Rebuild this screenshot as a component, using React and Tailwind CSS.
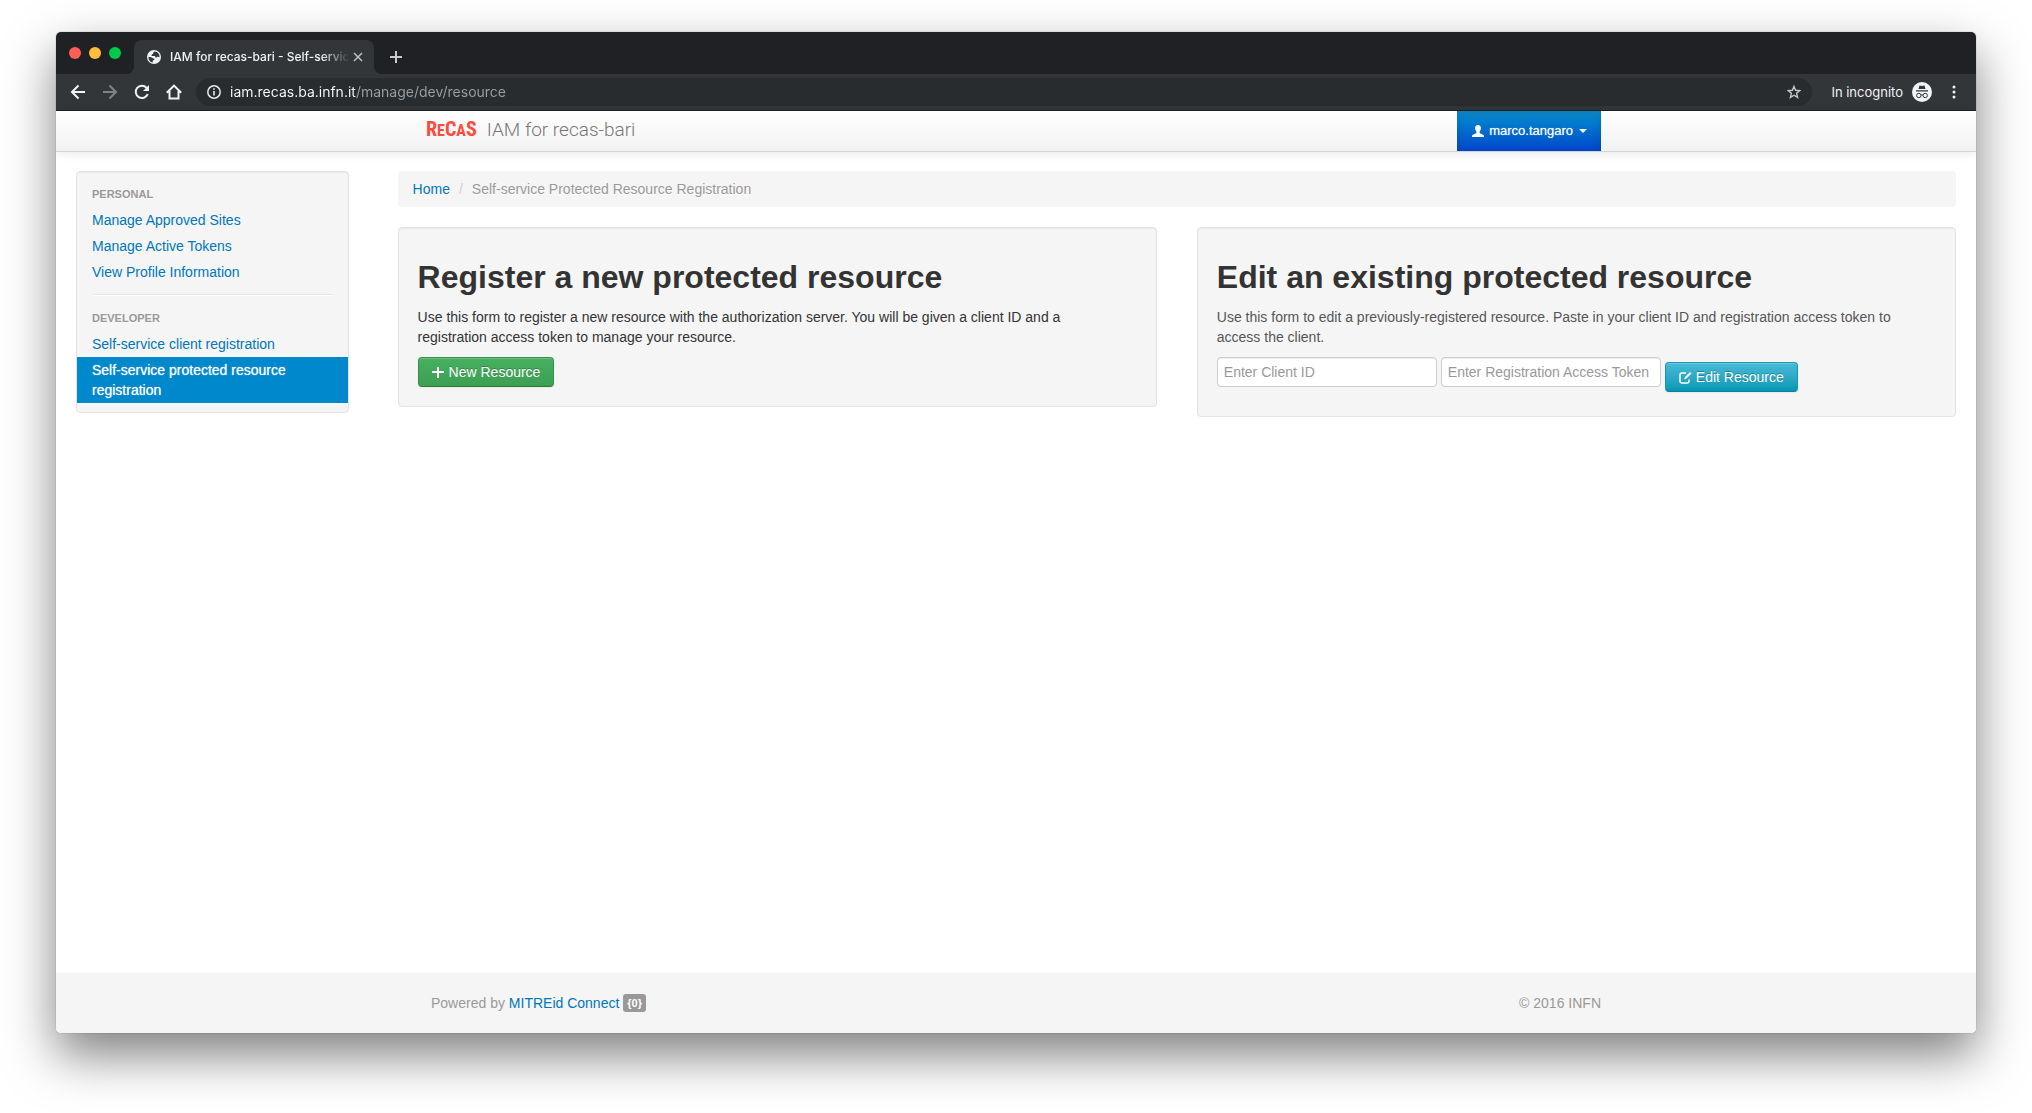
const personalLinks = ["Manage Approved Sites", "Manage Active Tokens", "View Profile Information"];

function Globe() {
  return (
    <svg className="size-[14px] shrink-0" viewBox="0 0 14 14" aria-hidden="true">
      <circle cx="7" cy="7" r="7" fill="#f1f3f4" />
      <path d="M7.600 1.500c-.9 0-1.300.8-1.300 1.600.3.6-.2 1-.9 1-.6.1-.5.9-.9 1.300-.3.4.3.6.8.5h2.200c.7 0 .8.700.8 1.300s1 .4 1.500 0c.4-.4 1-.5 1.600-.2l1.200.3A5.800 5.800 0 0 0 7.600 1.500Z" fill="#35363a" />
      <path d="M1.400 7.200c1.200-.3 3 .1 3.900.8.700.5 1.800.3 2.100 1 .2.700-.4 1.200-1.200 1.200-.5.1-.5.700-.5 1.200v1.200A5.800 5.800 0 0 1 1.400 7.200Z" fill="#35363a" />
    </svg>
  );
}

function Glyph({ d, color = "#f1f3f4", width = 2 }) {
  return (
    <svg className="size-4" viewBox="0 0 16 16" fill="none" stroke={color} strokeWidth={width} aria-hidden="true">
      <path d={d} />
    </svg>
  );
}

function TabStrip() {
  return (
    <div className="flex h-[42px] items-end bg-[#202124] pl-[13px]">
      <div className="flex h-[42px] w-[65px] gap-2 pt-[15px]">
        <span className="size-3 rounded-full bg-[#ff5f57]" />
        <span className="size-3 rounded-full bg-[#ffbd3e]" />
        <span className="size-3 rounded-full bg-[#00ca4e]" />
      </div>
      <div className="relative flex h-[34px] w-60 items-center rounded-t-lg bg-[#323639] pr-2 pl-[13px]">
        <span className="absolute bottom-0 -left-2 size-2 bg-[radial-gradient(circle_at_0_0,transparent_8px,#323639_8px)]" />
        <span className="absolute -right-2 bottom-0 size-2 bg-[radial-gradient(circle_at_100%_0,transparent_8px,#323639_8px)]" />
        <Globe />
        <span className="ml-[9px] flex-1 font-[Inter,sans-serif] text-xs font-medium whitespace-nowrap text-[#f1f3f4] [mask-image:linear-gradient(to_right,#000_84%,transparent)]">
          IAM for recas-bari - Self-servic
        </span>
        <button type="button" aria-label="Close tab">
          <Glyph d="M4 4l8 8M12 4l-8 8" color="#bdc1c6" width={1.5} />
        </button>
      </div>
      <button type="button" aria-label="New tab" className="mb-[9px] ml-[14px]">
        <Glyph d="M8 2v12M2 8h12" color="#c8cbce" width={2} />
      </button>
    </div>
  );
}

function Toolbar() {
  return (
    <div className="flex h-[37px] items-center border-b border-[#1f2023] bg-[#323639] px-[14px]">
      <div className="flex gap-4">
        <button type="button" aria-label="Back"><Glyph d="M15 8H2.500M8.500 1.500L2 8l6.500 6.500" /></button>
        <button type="button" aria-label="Forward"><Glyph d="M1 8h12.500M7.500 1.500L14 8l-6.500 6.500" color="#808386" /></button>
        <button type="button" aria-label="Reload">
          <svg className="size-4" viewBox="0 0 16 16" aria-hidden="true">
            <path d="M13.700 10.200A6.200 6.200 0 1 1 12.600 3.800" fill="none" stroke="#f1f3f4" strokeWidth="2" />
            <path d="M15 1v6H9z" fill="#f1f3f4" />
          </svg>
        </button>
        <button type="button" aria-label="Home"><Glyph d="M.8 8.800L8 1.600l7.200 7.200M3.500 7v7.500h9V7" /></button>
      </div>
      <div className="ml-[14px] flex h-7 flex-1 items-center rounded-full bg-[#282c2f] px-[11px]">
        <svg className="size-[14px]" viewBox="0 0 14 14" fill="none" stroke="#e8eaed" aria-hidden="true">
          <circle cx="7" cy="7" r="6.200" strokeWidth="1.500" />
          <path d="M7 6v4.500M7 3.300v1.500" strokeWidth="1.600" />
        </svg>
        <input
          type="text"
          aria-label="Address"
          defaultValue="iam.recas.ba.infn.it/manage/dev/resource"
          className="ml-[9px] flex-1 bg-[linear-gradient(to_right,#fff_126px,#9aa0a6_126px)] bg-clip-text font-[Inter,sans-serif] text-sm text-transparent"
        />
        <button type="button" aria-label="Bookmark">
          <svg className="size-[14px]" viewBox="0 0 14 14" fill="none" stroke="#c4c7ca" strokeWidth="1.400" aria-hidden="true">
            <path d="M7 1.400l1.600 3.900 4.200.3-3.200 2.700 1 4.100L7 10.200l-3.600 2.200 1-4.100L1.200 5.600l4.200-.3z" />
          </svg>
        </button>
      </div>
      <button type="button" className="ml-[19px] flex items-center gap-[9px] font-[Inter,sans-serif] text-[13px] text-[#f1f3f4]">
        In incognito
        <svg className="size-5" viewBox="0 0 20 20" aria-hidden="true">
          <circle cx="10" cy="10" r="10" fill="#f1f3f4" />
          <path d="M7.500 3.500l2.500.6 2.500-.6 1 3.500h-7zM4 8.200h12v1.200H4z" fill="#323639" />
          <g fill="none" stroke="#323639">
            <circle cx="6.800" cy="13.500" r="2.200" />
            <circle cx="13.200" cy="13.500" r="2.200" />
            <path d="M9 13.200q1-.8 2 0" />
          </g>
        </svg>
      </button>
      <button type="button" aria-label="Menu" className="ml-[14px]">
        <svg className="size-4" viewBox="0 0 16 16" fill="#f1f3f4" aria-hidden="true">
          <circle cx="8" cy="3" r="1.500" />
          <circle cx="8" cy="8" r="1.500" />
          <circle cx="8" cy="13" r="1.500" />
        </svg>
      </button>
    </div>
  );
}

function SiteHeader() {
  return (
    <header className="z-10 border-b border-[#d4d4d4] bg-linear-to-b from-white to-[#f2f2f2] shadow-[0_1px_10px_rgba(0,0,0,0.1)]">
      <div className="mx-auto flex h-10 w-full max-w-[1170px] items-center justify-between">
        <a href="#home" className="-ml-[5px] flex items-baseline gap-[10px]">
          <span className="font-['Roboto_Condensed','Liberation_Sans_Narrow','Liberation_Sans',sans-serif] text-xl leading-5 font-bold text-[#ff4a3d]">
            R<span className="text-base">E</span>C<span className="text-base">A</span>S
          </span>
          <span className="font-[Roboto,sans-serif] text-[19px] font-light text-[#777]">IAM for recas-bari</span>
        </a>
        <button
          type="button"
          className="flex h-10 items-center bg-linear-to-b from-[#0f8fd0] via-[#006ccc] to-[#0044cc] px-[14px] text-[13px] text-white shadow-[inset_0_3px_8px_rgba(0,0,0,0.125)] [text-shadow:0_0_1px_rgba(255,255,255,0.6)]"
        >
          <svg className="mr-1 size-[14px]" viewBox="0 0 14 14" fill="#fff" aria-hidden="true">
            <path d="M7 1c2 0 3 1.400 2.900 3.300-.1 1.500-.7 2.500-1.300 3.200v1.600l3.900 1.900c.3.200.5.600.5 1v1H1v-1c0-.4.200-.8.500-1l3.900-1.900V7.500C4.800 6.800 4.200 5.800 4.100 4.300 4 2.400 5 1 7 1z" />
          </svg>
          marco.tangaro
          <span className="ml-[6px] border-x-4 border-t-4 border-x-transparent border-t-white" />
        </button>
      </div>
    </header>
  );
}

function NavHeading({ children }) {
  return <h2 className="px-[15px] py-[3px] text-[11px] leading-5 font-bold text-[#999] uppercase [text-shadow:0_1px_0_rgba(255,255,255,0.5)]">{children}</h2>;
}

function NavLink({ children, active }) {
  return (
    <a
      href="#nav"
      aria-current={active ? "page" : undefined}
      className={
        active
          ? "block bg-[#0088cc] px-[15px] py-[3px] text-white [text-shadow:0_0_1px_rgba(255,255,255,0.7)]"
          : "block px-[15px] py-[3px] text-[#0077bb]"
      }
    >
      {children}
    </a>
  );
}

function Sidebar() {
  return (
    <nav className="w-[14.5%] shrink-0 rounded border border-[#e3e3e3] bg-[#f5f5f5] py-[9px] shadow-[inset_0_1px_1px_rgba(0,0,0,0.05)]">
      <NavHeading>Personal</NavHeading>
      {personalLinks.map((label) => (
        <NavLink key={label}>{label}</NavLink>
      ))}
      <hr className="mx-4 my-[9px] h-[2px] border-t border-b border-t-[#e5e5e5] border-b-white" />
      <NavHeading>Developer</NavHeading>
      <NavLink>Self-service client registration</NavLink>
      <NavLink active>Self-service protected resource registration</NavLink>
    </nav>
  );
}

function Well({ title, text, textClass, children }) {
  return (
    <section className="rounded border border-[#e3e3e3] bg-[#f5f5f5] p-[19px] shadow-[inset_0_1px_1px_rgba(0,0,0,0.05)]">
      <h1 className="my-[10px] text-[32px] leading-10 font-bold text-[#333]">{title}</h1>
      <p className={textClass}>{text}</p>
      {children}
    </section>
  );
}

export default function App() {
  return (
    <div className="flex min-h-screen flex-col bg-white px-14 pt-8 pb-20 font-['Liberation_Sans',Arial,sans-serif] text-sm leading-5 text-[#333]">
      <div className="flex flex-1 flex-col rounded-[5px] shadow-[0_0_1px_rgba(0,0,0,0.6),0_22px_50px_rgba(0,0,0,0.5)]">
        <div className="flex flex-1 flex-col overflow-hidden rounded-[5px] bg-white">
          <TabStrip />
          <Toolbar />
          <SiteHeader />
          <main className="flex flex-1 items-start gap-[49px] px-5 pt-[19px]">
            <Sidebar />
            <div className="min-w-0 flex-1">
              <ol className="mb-5 flex rounded bg-[#f5f5f5] px-[15px] py-2 [text-shadow:0_1px_0_#fff]">
                <li><a href="#home" className="text-[#0077bb]">Home</a></li>
                <li aria-hidden="true" className="px-[9px] text-[#ccc]">/</li>
                <li className="text-[#999]">Self-service Protected Resource Registration</li>
              </ol>
              <div className="grid grid-cols-2 items-start gap-10">
                <Well
                  title="Register a new protected resource"
                  text="Use this form to register a new resource with the authorization server. You will be given a client ID and a registration access token to manage your resource."
                  textClass="mb-[10px] pr-8"
                >
                  <button
                    type="button"
                    className="flex h-[30px] items-center rounded border border-[#3a8f4c] border-b-[#2c7a3c] bg-linear-to-b from-[#46b060] to-[#3d9f54] px-[13px] text-white shadow-[inset_0_1px_0_rgba(255,255,255,0.2),0_1px_2px_rgba(0,0,0,0.05)] [text-shadow:0_-1px_0_rgba(0,0,0,0.25)]"
                  >
                    <svg className="mr-1 size-[13px]" viewBox="0 0 13 13" fill="#fff" aria-hidden="true">
                      <path d="M5 1h2v4h5v2H7v5H5V7H0V5h5z" />
                    </svg>
                    New Resource
                  </button>
                </Well>
                <Well
                  title="Edit an existing protected resource"
                  text="Use this form to edit a previously-registered resource. Paste in your client ID and registration access token to access the client."
                  textClass="mb-[10px] text-[#555]"
                >
                  <form className="flex items-center gap-1">
                    <input
                      type="text"
                      aria-label="Client ID"
                      placeholder="Enter Client ID"
                      className="mb-[10px] h-[30px] w-[220px] rounded border border-[#ccc] bg-white px-[6px] shadow-[inset_0_1px_1px_rgba(0,0,0,0.075)] placeholder:text-[#999]"
                    />
                    <input
                      type="text"
                      aria-label="Registration Access Token"
                      placeholder="Enter Registration Access Token"
                      className="mb-[10px] h-[30px] w-[220px] rounded border border-[#ccc] bg-white px-[6px] shadow-[inset_0_1px_1px_rgba(0,0,0,0.075)] placeholder:text-[#999]"
                    />
                    <button
                      type="button"
                      className="flex h-[30px] items-center rounded border border-[#1f94b0] border-b-[#0b7f98] bg-linear-to-b from-[#46bcd8] to-[#0097b4] px-[13px] text-white shadow-[inset_0_1px_0_rgba(255,255,255,0.2),0_1px_2px_rgba(0,0,0,0.05)] [text-shadow:0_-1px_0_rgba(0,0,0,0.25)]"
                    >
                      <svg className="mr-1 size-[13px]" viewBox="0 0 13 13" fill="none" stroke="#fff" aria-hidden="true">
                        <path d="M7 2H3Q1 2 1 4v6q0 2 2 2h5q2 0 2-2V8.500" strokeWidth="1.500" />
                        <path d="M5 8.500l1-2.500 5-5 1.500 1.500-5 5z" fill="#fff" stroke="none" />
                      </svg>
                      Edit Resource
                    </button>
                  </form>
                </Well>
              </div>
            </div>
          </main>
          <footer className="bg-[#f5f5f5] text-[#999]">
            <div className="mx-auto flex h-[60px] w-full max-w-[1170px] items-center justify-between">
              <p className="flex items-center gap-1">
                <span>Powered by <a href="#mitreid" className="text-[#0077bb]">MITREid Connect</a></span>
                <span className="rounded-[3px] bg-[#999] px-1 text-[11px] leading-[18px] font-bold text-white">{"{0}"}</span>
              </p>
              <p>© 2016 INFN</p>
            </div>
          </footer>
        </div>
      </div>
    </div>
  );
}
